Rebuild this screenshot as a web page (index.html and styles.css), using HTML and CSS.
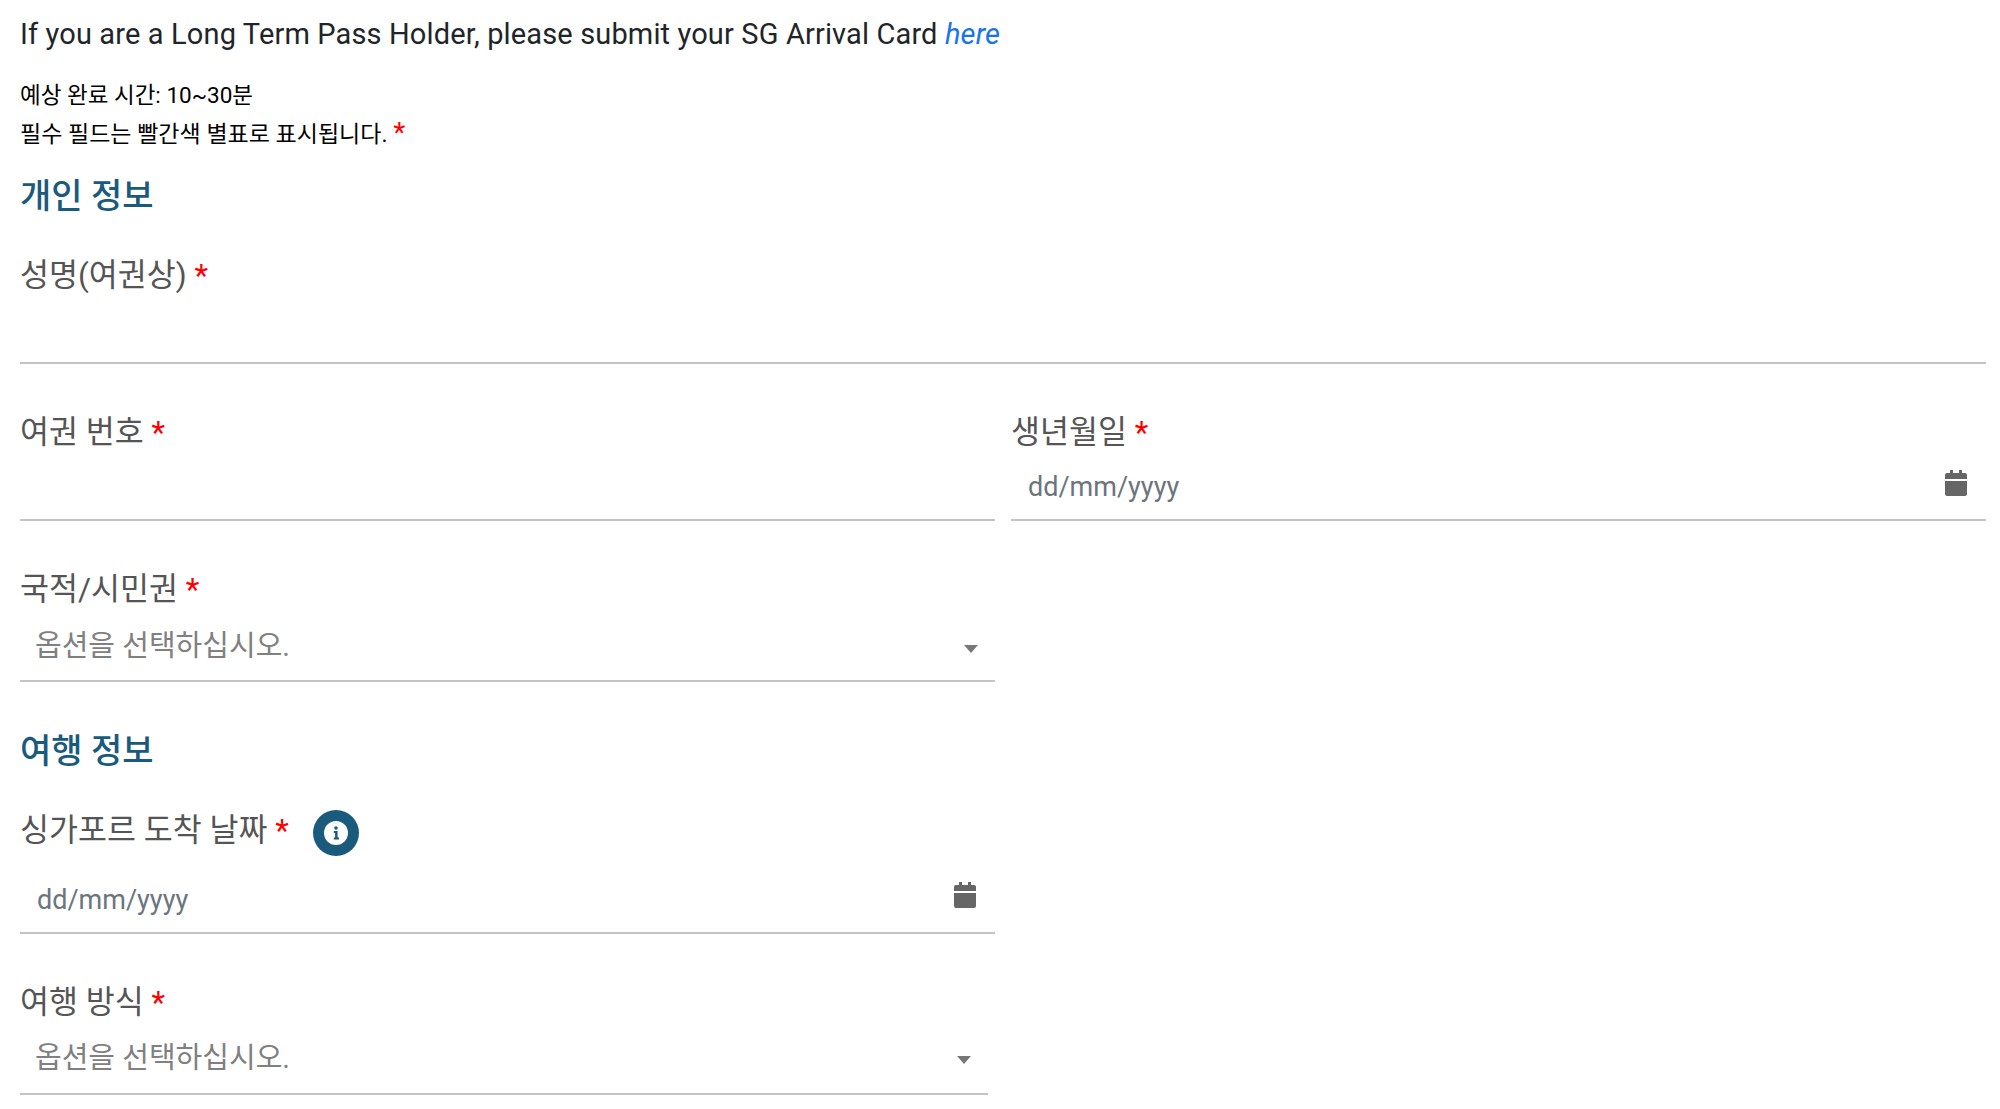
FILE: index.html
```html
<!DOCTYPE html>
<html lang="ko">
<head>
    <meta charset="UTF-8">
    <title>SG Arrival Card</title>
    <link rel="stylesheet" href="styles.css">
</head>
<body>
    <div class="container">
        <p class="notice">If you are a Long Term Pass Holder, please submit your SG Arrival Card <a href="#">here</a></p>
        <p class="hint hint-first">예상 완료 시간: 10~30분</p>
        <p class="hint">필수 필드는 빨간색 별표로 표시됩니다. <span class="req">*</span></p>

        <h3 class="section">개인 정보</h3>
        <div class="field">
            <label>성명(여권상) <span class="req">*</span></label>
            <div class="control"></div>
        </div>
        <div class="row">
            <div class="field">
                <label>여권 번호 <span class="req">*</span></label>
                <div class="control"></div>
            </div>
            <div class="field">
                <label>생년월일 <span class="req">*</span></label>
                <div class="control">
                    <span class="date-text">dd/mm/yyyy</span>
                    <svg class="cal" viewBox="0 0 22 26"><path d="M5 0h3v3h6V0h3v3h3a2 2 0 0 1 2 2v4H0V5a2 2 0 0 1 2-2h3zM0 11h22v13a2 2 0 0 1-2 2H2a2 2 0 0 1-2-2z"/></svg>
                </div>
            </div>
        </div>
        <div class="row">
            <div class="field field-select">
                <label>국적/시민권 <span class="req">*</span></label>
                <div class="control">
                    <span class="select-text">옵션을 선택하십시오.</span>
                    <svg class="arrow" viewBox="0 0 14 8"><path d="M0 0h14L7 8z"/></svg>
                </div>
            </div>
        </div>

        <h3 class="section section-travel">여행 정보</h3>
        <div class="row">
            <div class="field field-date">
                <label>싱가포르 도착 날짜 <span class="req">*</span><svg class="info" viewBox="0 0 46 46">
                        <circle cx="23" cy="23" r="23" fill="#195a7d"/>
                        <circle cx="23" cy="23" r="12" fill="#fff"/>
                        <circle cx="23" cy="18" r="1.800" fill="#195a7d"/>
                        <path d="M20.800 21h3.800v6.500h1.400V29.500h-5.200v-2h1.300v-4.500h-1.300z" fill="#195a7d"/>
                    </svg></label>
                <div class="control">
                    <span class="date-text">dd/mm/yyyy</span>
                    <svg class="cal" viewBox="0 0 22 26"><path d="M5 0h3v3h6V0h3v3h3a2 2 0 0 1 2 2v4H0V5a2 2 0 0 1 2-2h3zM0 11h22v13a2 2 0 0 1-2 2H2a2 2 0 0 1-2-2z"/></svg>
                </div>
            </div>
        </div>
        <div class="row">
            <div class="field field-select field-narrow">
                <label>여행 방식 <span class="req">*</span></label>
                <div class="control">
                    <span class="select-text">옵션을 선택하십시오.</span>
                    <svg class="arrow" viewBox="0 0 14 8"><path d="M0 0h14L7 8z"/></svg>
                </div>
            </div>
        </div>
    </div>
</body>
</html>
```

FILE: styles.css
```css
body { margin: 0; background: #fff; color: #212529; font-family: Roboto, "Noto Sans CJK KR", sans-serif; }
.container { padding: 16px 14px 0 20px; }
p { margin: 0; }
.notice { font-size: 29px; line-height: 36px; letter-spacing: 0.14px; }
.notice a { color: #1a73e8; font-style: italic; text-decoration: none; }
.hint { font-size: 22.5px; line-height: 38px; color: #000; }
.hint + .hint { font-size: 23px; }
.hint .req { font-size: 28px; }
.hint-first { margin-top: 24px; }
.req { color: #f00; }
.section { margin: 20px 0 0; font-size: 34px; line-height: 44px; font-weight: 500; color: #195a7d; }
.section-travel { margin-top: 47px; }
.field { margin-top: 44px; }
.section + .field, .section + .row .field { margin-top: 33px; }
.row { display: grid; grid-template-columns: 1fr 1fr; column-gap: 16px; }
label { display: block; height: 44px; line-height: 50px; font-size: 31.5px; color: #555; white-space: nowrap; }
.control { display: flex; align-items: center; justify-content: space-between; box-sizing: border-box; height: 69px; padding-top: 3px; border-bottom: 2px solid #c4c4c4; }
.date-text { padding-left: 17px; font-size: 27px; color: #6c757d; }
.select-text { padding-left: 15px; font-size: 29px; color: #808080; }
.cal { width: 22px; height: 26px; fill: #666; margin: -8px 19px 0 0; }
.arrow { width: 14px; height: 8px; fill: #777; margin: 11px 17px 0 0; }
.info { width: 46px; height: 46px; margin-left: 24px; vertical-align: middle; }
.field-select .control { height: 73px; padding: 0 0 3px; }
.field-date .control { height: 84px; padding-top: 18px; }
.field-date .cal { margin-top: -11px; }
.field-narrow { width: 968px; }
.field-narrow .control { padding-bottom: 6px; }
```
